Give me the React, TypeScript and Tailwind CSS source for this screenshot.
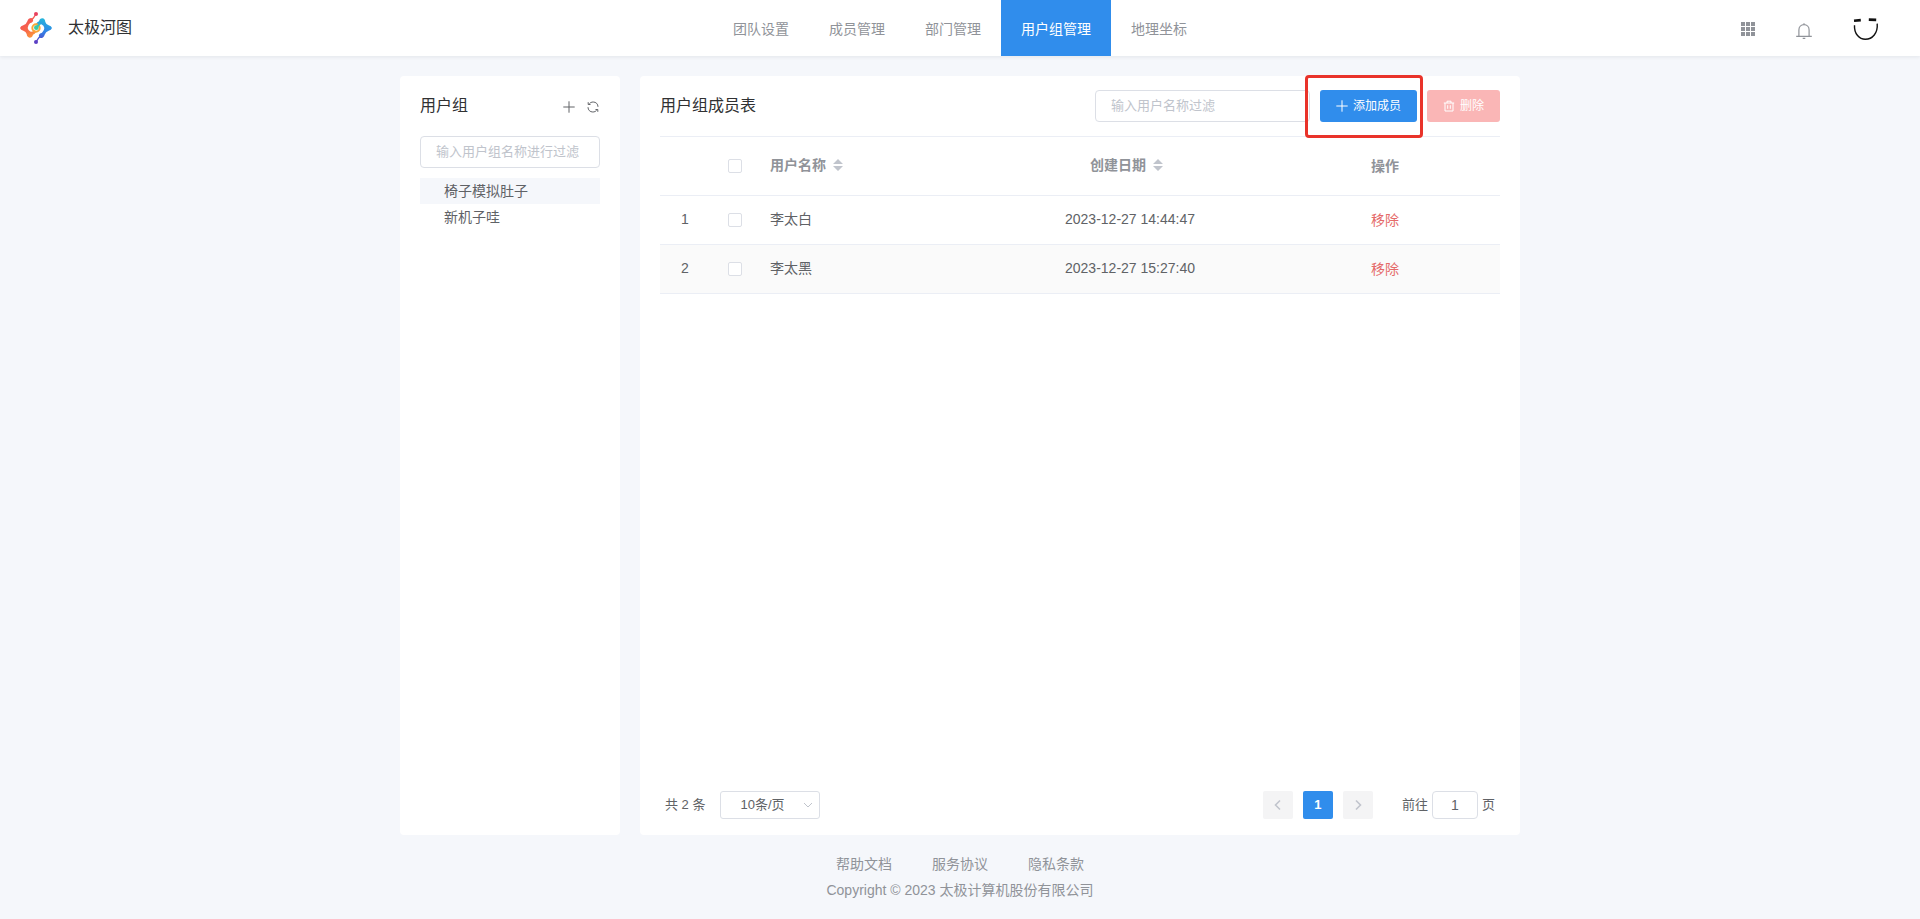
import React, { useState } from 'react';

const navItems = ['团队设置', '成员管理', '部门管理', '用户组管理', '地理坐标'];
const groups = ['椅子模拟肚子', '新机子哇'];
const members = [
    { id: 1, name: '李太白', date: '2023-12-27 14:44:47' },
    { id: 2, name: '李太黑', date: '2023-12-27 15:27:40' },
];
const footerLinks = ['帮助文档', '服务协议', '隐私条款'];

const Logo: React.FC = () => (
    <svg width="32" height="32" viewBox="0 0 96 96" fill="none" aria-hidden="true">
        <defs>
            <linearGradient id="warm" gradientUnits="userSpaceOnUse" x1="10" y1="10" x2="56" y2="72">
                <stop offset="0" stopColor="#ef4a5c" />
                <stop offset="0.55" stopColor="#f8694a" />
                <stop offset="1" stopColor="#fba636" />
            </linearGradient>
            <linearGradient id="cool" gradientUnits="userSpaceOnUse" x1="70" y1="18" x2="56" y2="92">
                <stop offset="0" stopColor="#25b8da" />
                <stop offset="0.5" stopColor="#2f86e8" />
                <stop offset="1" stopColor="#5b3fc4" />
            </linearGradient>
        </defs>
        {/* Left arm */}
        <path d="M48 6 L40 18 L32 26" stroke="url(#warm)" strokeWidth="4" />
        <path d="M0 48 Q2 42 10 40 Q19 37 22 28 Q25 18 34 18 Q41 20 39 28 Q37 33 30 34 Q23 40 23 48 Q24 56 32 59 Q40 60 44 54 L49 59 Q44 66 39 68 Q37 77 29 77 Q21 76 20 66 Q18 59 10 56 Q2 54 0 48 Z" fill="url(#warm)" />
        <circle cx="48" cy="6" r="6" fill="#e8415f" />
        {/* Right arm */}
        <path d="M48 90 L56 78 L64 70" stroke="url(#cool)" strokeWidth="4" />
        <path d="M96 48 Q94 54 86 56 Q77 59 74 68 Q71 78 62 78 Q55 76 57 68 Q59 63 66 62 Q73 56 73 48 Q72 40 64 37 Q56 36 52 42 L47 37 Q52 30 57 28 Q59 19 67 19 Q75 20 76 30 Q78 37 86 40 Q94 42 96 48 Z" fill="url(#cool)" />
        <circle cx="48" cy="90" r="6" fill="#5b3fc4" />
        <circle cx="48" cy="48" r="11" stroke="#fba636" strokeWidth="6" />
        <path d="M48 48 L60 35" stroke="#2cc0c4" strokeWidth="6" />
        <circle cx="49" cy="47" r="7" fill="#3cc9a3" />
    </svg>
);

const PlusIcon: React.FC = () => (
    <svg width="12" height="12" viewBox="0 0 12 12" stroke="currentColor" strokeWidth="1" aria-hidden="true">
        <path d="M6 .3v11.4M.3 6h11.4" />
    </svg>
);

const RefreshIcon: React.FC = () => (
    <svg width="12" height="12" viewBox="0 0 12 12" fill="none" stroke="currentColor" strokeWidth="1" aria-hidden="true">
        <path d="M1 6.2C1 9 3 11 5.8 11c1.600 0 2.900-.6 3.800-1.700M11 5.800C11 3 9 1 6.200 1 4.600 1 3.300 1.600 2.400 2.700" />
        <path d="M1.200 1.200v2.300h2.300M10.800 10.800V8.500H8.500" />
    </svg>
);

const TrashIcon: React.FC = () => (
    <svg width="12" height="12" viewBox="0 0 12 12" fill="none" stroke="currentColor" strokeWidth="1" aria-hidden="true">
        <path d="M.8 3h10.400M4 3V1.200h4V3M2 3v8h8V3M4.700 5.200v3.600M7.300 5.200v3.600" />
    </svg>
);

const GridIcon: React.FC = () => (
    <svg width="14" height="14" viewBox="0 0 14 14" fill="currentColor" aria-hidden="true">
        {[0, 5, 10].map((y) => [0, 5, 10].map((x) => <rect key={`${x}-${y}`} x={x} y={y} width="4" height="4" />))}
    </svg>
);

const BellIcon: React.FC = () => (
    <svg width="16" height="16" viewBox="0 0 16 16" fill="none" stroke="currentColor" strokeWidth="1.2" aria-hidden="true">
        <path d="M.2 13.400h15.600M2.900 13.400V6.900C2.900 4 5.100 1.700 8 1.700s5.100 2.300 5.100 5.200v6.500M8 .2v1.500M6.700 15.400h2.600" />
    </svg>
);

const FaceIcon: React.FC = () => (
    <svg width="26" height="24" viewBox="0 0 26 24" fill="none" stroke="#111" aria-hidden="true">
        <path d="M1 3.700l6.800-.6M15.800 2.600l7.400.3" strokeWidth="2.600" />
        <path d="M1.500 8.200C1 17 6.500 22.300 12.300 22.300 19.500 22.300 25 16 24.200 6.600" strokeWidth="1.400" />
    </svg>
);

const SortIcon: React.FC = () => (
    <svg className="ml-[7px]" width="10" height="12" viewBox="0 0 10 12" fill="#c0c4cc" aria-hidden="true">
        <path d="M5 0l5 5H0zM5 12l5-5H0z" />
    </svg>
);

const Arrow: React.FC<{ d: string }> = ({ d }) => (
    <svg width="12" height="12" viewBox="0 0 12 12" fill="none" stroke="currentColor" strokeWidth="1.6" aria-hidden="true">
        <path d={d} />
    </svg>
);

const Checkbox: React.FC<{ label: string; checked: boolean; onChange: () => void }> = ({ label, checked, onChange }) => (
    <input
        type="checkbox"
        aria-label={label}
        checked={checked}
        onChange={onChange}
        className="block mx-auto size-[14px] appearance-none rounded-[2px] border border-[#dcdfe6] bg-white checked:border-[#308dec] checked:bg-[#308dec]"
    />
);

const Header: React.FC = () => (
    <header className="relative z-10 grid h-14 grid-cols-[1fr_auto_1fr] items-center bg-white shadow-[0_1px_4px_rgba(0,21,41,0.08)]">
        <div className="flex items-center gap-4 pl-5">
            <Logo />
            <span className="text-base text-[#303133]">太极河图</span>
        </div>
        <nav className="flex h-full">
            {navItems.map((item) => (
                <a
                    key={item}
                    href="#"
                    className={`flex h-full items-center px-5 pt-px ${item === '用户组管理' ? 'bg-[#308dec] text-white' : 'text-[#909399]'}`}
                >
                    {item}
                </a>
            ))}
        </nav>
        <div className="flex items-center justify-end pt-[2px] pr-[41px] text-[#909399]">
            <button type="button" aria-label="应用">
                <GridIcon />
            </button>
            <button type="button" aria-label="消息" className="ml-[41px] pt-1">
                <BellIcon />
            </button>
            <button type="button" aria-label="头像" className="ml-[41px]">
                <FaceIcon />
            </button>
        </div>
    </header>
);

const GroupPanel: React.FC = () => {
    const [active, setActive] = useState(groups[0]);

    return (
        <aside className="w-[220px] shrink-0 rounded bg-white px-5">
            <div className="flex h-15 items-center justify-between">
                <h2 className="text-base text-[#303133]">用户组</h2>
                <div className="flex items-center gap-3 pt-[2px] pr-px text-[#606266]">
                    <button type="button" aria-label="新增用户组">
                        <PlusIcon />
                    </button>
                    <button type="button" aria-label="刷新">
                        <RefreshIcon />
                    </button>
                </div>
            </div>
            <input
                type="text"
                aria-label="输入用户组名称进行过滤"
                placeholder="输入用户组名称进行过滤"
                className="block h-8 w-full rounded border border-[#dcdfe6] px-[15px] pb-[2px] text-[13px] placeholder:text-[#c0c4cc]"
            />
            <ul className="mt-[10px]">
                {groups.map((group) => (
                    <li key={group}>
                        <button
                            type="button"
                            onClick={() => setActive(group)}
                            className={`block h-[26px] w-full pl-6 text-left ${active === group ? 'bg-[#f5f7fb]' : ''}`}
                        >
                            {group}
                        </button>
                    </li>
                ))}
            </ul>
        </aside>
    );
};

const MemberTable: React.FC = () => {
    const [selected, setSelected] = useState<number[]>([]);
    const allSelected = selected.length === members.length;

    const toggle = (id: number) =>
        setSelected(selected.includes(id) ? selected.filter((s) => s !== id) : [...selected, id]);

    return (
        <table className="w-full table-fixed border-t border-[#ebeef5]">
            <colgroup>
                <col className="w-[50px]" />
                <col className="w-[50px]" />
                <col className="w-[230px]" />
                <col />
                <col className="w-[230px]" />
            </colgroup>
            <thead>
                <tr className="h-[59px] border-b border-[#ebeef5] text-[#909399]">
                    <th />
                    <th>
                        <Checkbox
                            label="全选"
                            checked={allSelected}
                            onChange={() => setSelected(allSelected ? [] : members.map((m) => m.id))}
                        />
                    </th>
                    <th className="px-[10px] pb-[2px] text-left">
                        <button type="button" className="inline-flex items-center pr-[7px] font-bold">
                            用户名称
                            <SortIcon />
                        </button>
                    </th>
                    <th className="pb-[2px]">
                        <button type="button" className="inline-flex items-center pr-[7px] font-bold">
                            创建日期
                            <SortIcon />
                        </button>
                    </th>
                    <th>操作</th>
                </tr>
            </thead>
            <tbody>
                {members.map((member) => (
                    <tr key={member.id} className="h-[49px] border-b border-[#ebeef5] even:bg-[#fafafa]">
                        <td className="pb-[2px] text-center">{member.id}</td>
                        <td>
                            <Checkbox
                                label={member.name}
                                checked={selected.includes(member.id)}
                                onChange={() => toggle(member.id)}
                            />
                        </td>
                        <td className="px-[10px] pb-[2px]">{member.name}</td>
                        <td className="pb-[2px] text-center">{member.date}</td>
                        <td className="text-center">
                            <button type="button" className="text-[#e56a6a]">移除</button>
                        </td>
                    </tr>
                ))}
            </tbody>
        </table>
    );
};

const Pagination: React.FC = () => (
    <div className="mt-auto mb-4 flex h-7 items-center px-[5px] text-[13px]">
        <span>共 2 条</span>
        <div className="relative ml-[15px]">
            <select
                aria-label="每页条数"
                className="block h-7 w-[100px] appearance-none rounded-[3px] border border-[#dcdfe6] bg-white pl-[19px]"
            >
                <option>10条/页</option>
                <option>20条/页</option>
            </select>
            <svg className="pointer-events-none absolute top-2 right-[6px]" width="12" height="12" viewBox="0 0 12 12" fill="none" stroke="#c0c4cc" aria-hidden="true">
                <path d="M2 4l4 4 4-4" />
            </svg>
        </div>
        <div className="ml-auto flex gap-[10px]">
            <button type="button" aria-label="上一页" disabled className="grid h-7 w-[30px] place-items-center rounded-[2px] bg-[#f4f4f5] text-[#c0c4cc]">
                <Arrow d="M8 1.500L3.500 6 8 10.500" />
            </button>
            <button type="button" className="h-7 w-[30px] rounded-[2px] bg-[#308dec] font-bold text-white">
                1
            </button>
            <button type="button" aria-label="下一页" disabled className="grid h-7 w-[30px] place-items-center rounded-[2px] bg-[#f4f4f5] text-[#c0c4cc]">
                <Arrow d="M4 1.500L8.500 6 4 10.500" />
            </button>
        </div>
        <label className="ml-[29px] flex items-center gap-1">
            前往
            <input
                type="text"
                defaultValue="1"
                className="h-7 w-[46px] rounded border border-[#dcdfe6] text-center text-sm"
            />
            页
        </label>
    </div>
);

const MemberPanel: React.FC = () => (
    <main className="flex min-w-0 flex-1 flex-col rounded bg-white px-5">
        <div className="flex h-15 items-center">
            <h2 className="text-base text-[#303133]">用户组成员表</h2>
            <input
                type="text"
                aria-label="输入用户名称过滤"
                placeholder="输入用户名称过滤"
                className="ml-auto h-8 w-[215px] rounded border border-[#dcdfe6] px-[15px] pb-[2px] text-[13px] placeholder:text-[#c0c4cc]"
            />
            <div className="relative ml-[10px]">
                <button type="button" className="flex h-8 items-center gap-[5px] rounded-[3px] bg-[#308dec] px-4 text-xs text-white">
                    <PlusIcon />
                    添加成员
                </button>
                {/* Highlight frame */}
                <span className="pointer-events-none absolute -top-[15px] -right-[6px] -bottom-4 -left-[15px] rounded-[4px] border-3 border-[#e9332a]" />
            </div>
            <button type="button" disabled className="ml-[10px] flex h-8 items-center gap-[5px] rounded-[3px] bg-[#fab6b6] px-4 text-xs text-white">
                <TrashIcon />
                删除
            </button>
        </div>
        <MemberTable />
        <Pagination />
    </main>
);

const App: React.FC = () => (
    <div className="flex min-h-screen flex-col bg-[#f5f7fb] font-['Liberation_Sans','Noto_Sans_CJK_SC',sans-serif] text-sm text-[#606266]">
        <Header />
        <div className="mx-auto flex w-full max-w-[1120px] flex-1 gap-5 pt-5">
            <GroupPanel />
            <MemberPanel />
        </div>
        <footer className="flex h-[84px] flex-col items-center gap-[6px] pt-[19px] text-[#909399]">
            <div className="flex gap-10">
                {footerLinks.map((link) => (
                    <a key={link} href="#">{link}</a>
                ))}
            </div>
            <p>Copyright © 2023 太极计算机股份有限公司</p>
        </footer>
    </div>
);

export default App;
